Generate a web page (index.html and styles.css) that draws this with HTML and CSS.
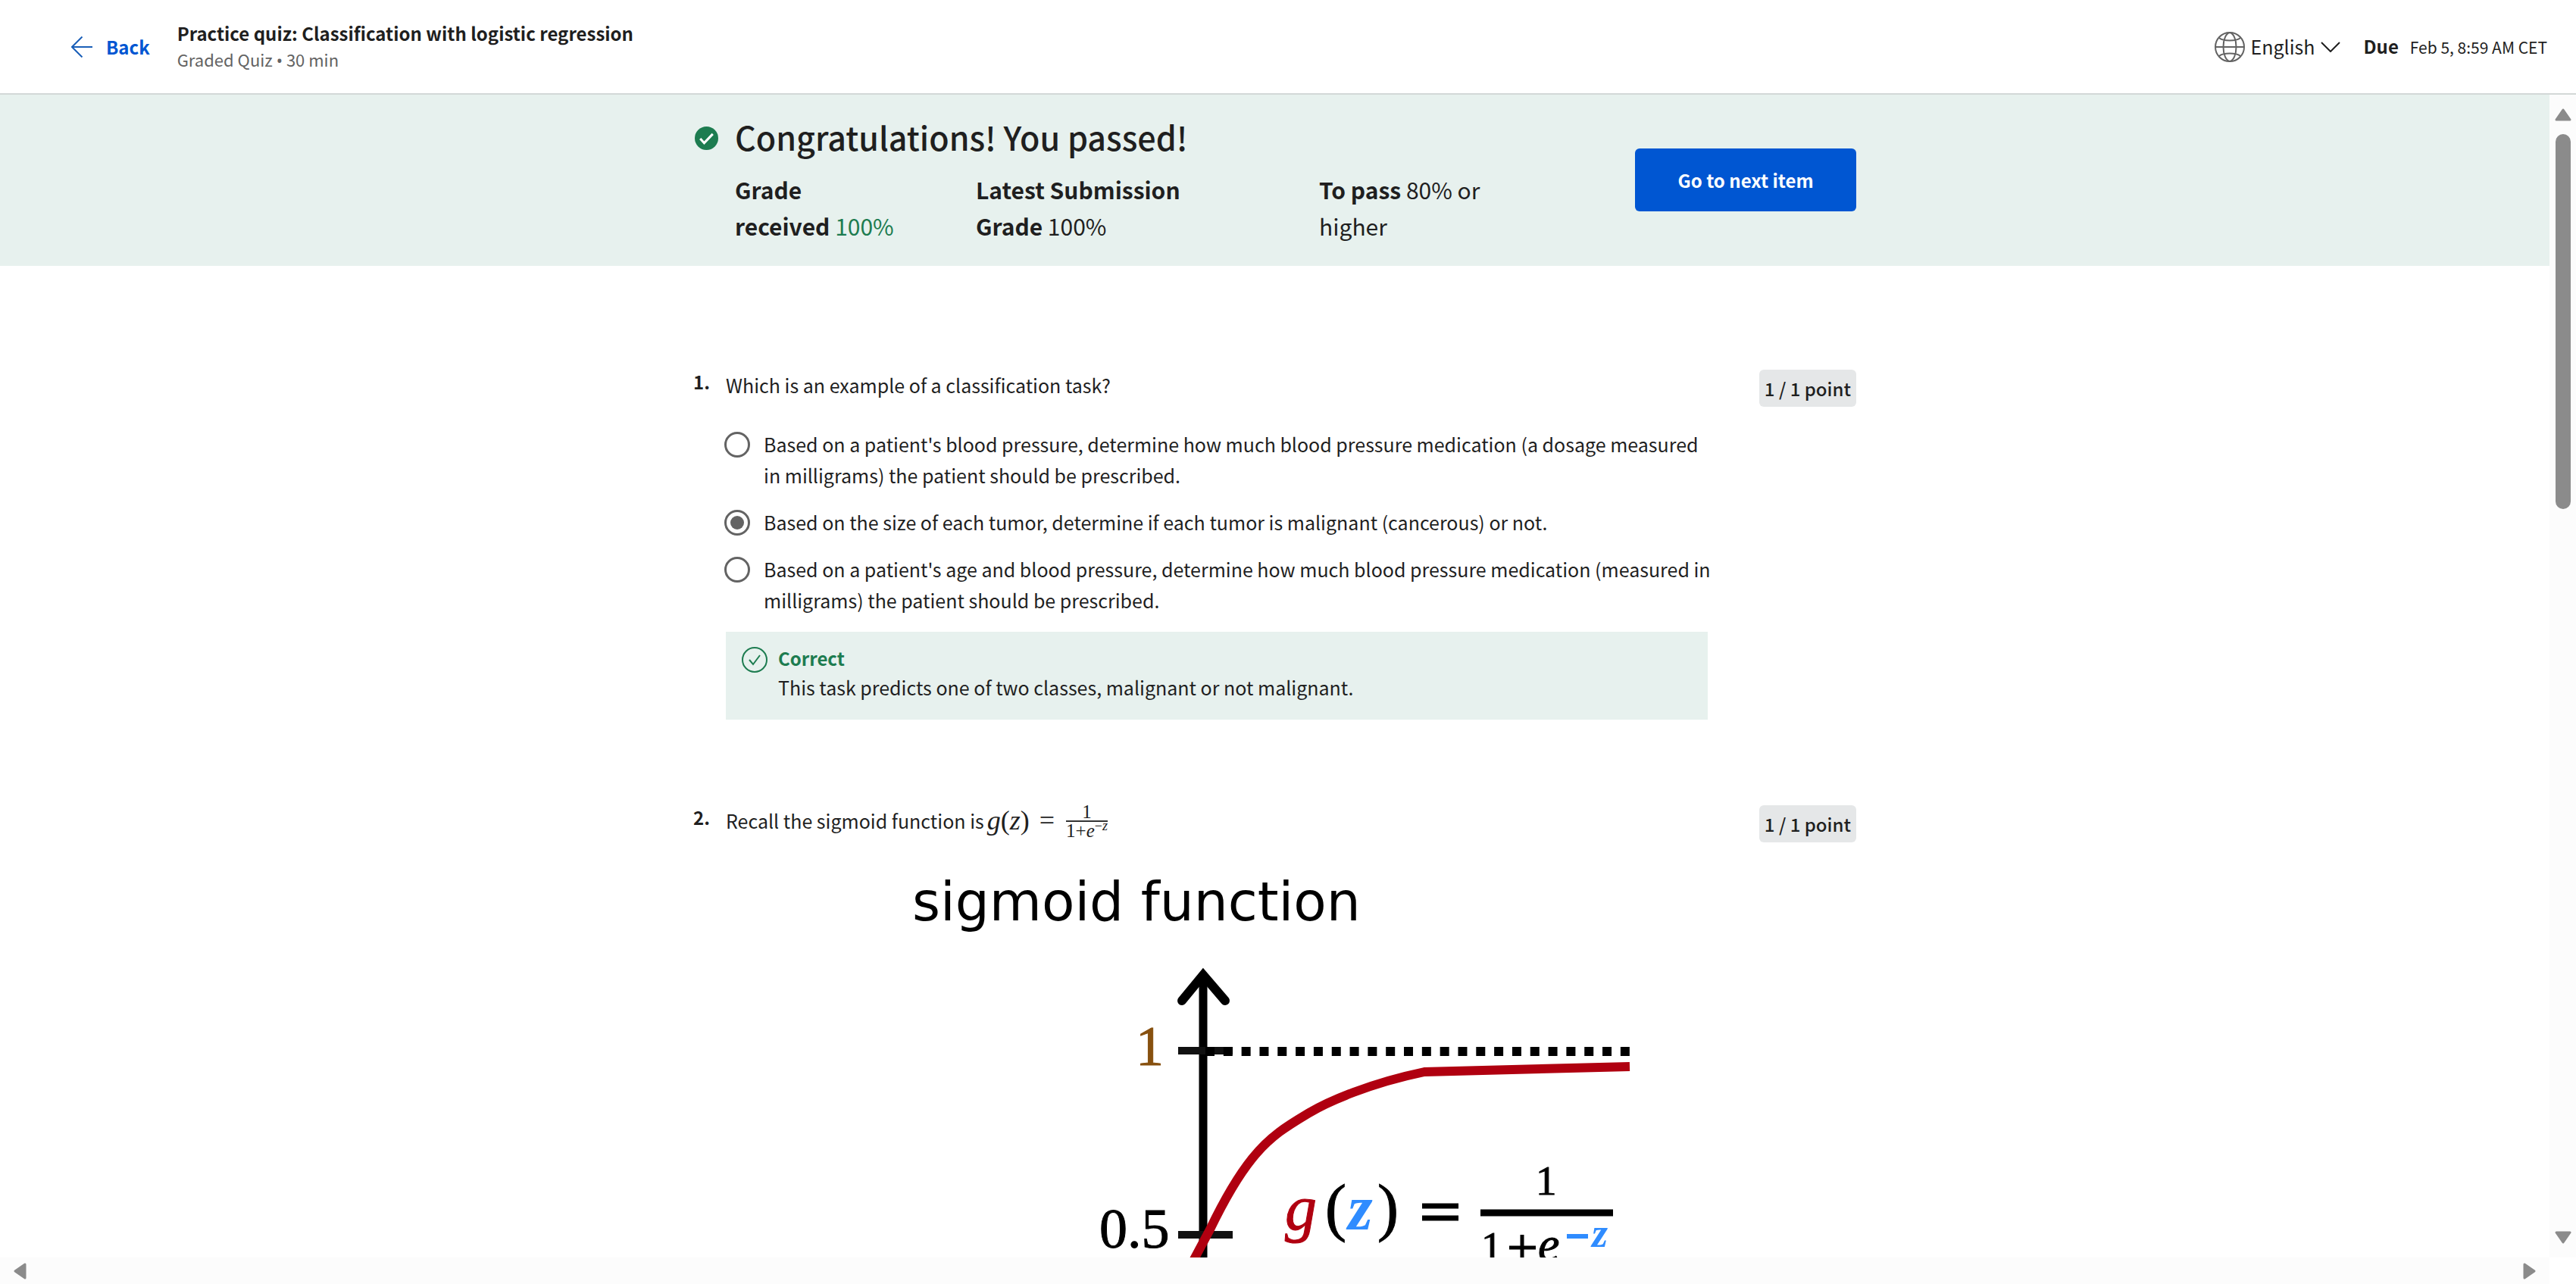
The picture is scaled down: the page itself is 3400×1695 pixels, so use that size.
FILE: index.html
```html
<!DOCTYPE html>
<html lang="en">
<head>
<meta charset="utf-8">
<title>Practice quiz: Classification with logistic regression</title>
<link rel="stylesheet" href="styles.css">
</head>
<body>
<header class="topbar">
  <a class="back" href="#">
    <svg class="back-icon" viewBox="0 0 28 28" aria-hidden="true"><path d="M28 14H1M14.500 0.500L1 14l13.500 13.500"/></svg>
    Back
  </a>
  <div class="heading">
    <h1 class="heading-title">Practice quiz: Classification with logistic regression</h1>
    <p class="heading-sub">Graded Quiz <span class="bullet">•</span> 30 min</p>
  </div>
  <button class="language" type="button">
    <svg class="globe" viewBox="0 0 40 40" aria-hidden="true"><circle cx="20" cy="20" r="19"/><path d="M1 20h38M20 1c-5 1-8.500 9-8.500 19S15 38 20 39M20 1c5 1 8.500 9 8.500 19S25 38 20 39M6 8c3 2.500 8 3.500 14 3.500S31 10.500 34 8M6 32c3-2.500 8-3.500 14-3.500s11 1 14 3.500"/></svg>
    English
    <svg class="chevron" viewBox="0 0 26 14" aria-hidden="true"><path d="M1 1l12 12L25 1"/></svg>
  </button>
  <p class="due"><strong class="due-label">Due</strong> <span class="due-date">Feb 5, 8:59 AM CET</span></p>
</header>

<div class="viewport">
  <main class="content">
    <section class="banner">
      <div class="column banner-row">
        <svg class="passed-icon" viewBox="0 0 30 30" aria-hidden="true"><circle cx="15" cy="15" r="15"/><path d="M7 15.500l5 5.500L23 9.500"/></svg>
        <div class="result">
          <h2 class="result-title">Congratulations! You passed!</h2>
          <div class="grades">
            <p class="grade"><b>Grade received</b>&nbsp;<span class="score">100%</span></p>
            <p class="grade"><b>Latest Submission Grade</b>&nbsp;100%</p>
            <p class="grade"><b>To pass</b> 80% or higher</p>
          </div>
        </div>
        <button class="next" type="button">Go to next item</button>
      </div>
    </section>

    <section class="column questions">
      <article class="question">
        <div class="number">1.</div>
        <div class="question-body">
          <fieldset class="choices">
            <legend class="prompt">Which is an example of a classification task?</legend>
            <label class="choice"><input class="radio" type="radio" name="q1"><span>Based on a patient's blood pressure, determine how much blood pressure medication (a dosage measured in milligrams) the patient should be prescribed.</span></label>
            <label class="choice"><input class="radio" type="radio" name="q1" checked><span>Based on the size of each tumor, determine if each tumor is malignant (cancerous) or not.</span></label>
            <label class="choice"><input class="radio" type="radio" name="q1"><span>Based on a patient's age and blood pressure, determine how much blood pressure medication (measured in milligrams) the patient should be prescribed.</span></label>
          </fieldset>
          <div class="feedback">
            <svg class="feedback-icon" viewBox="0 0 34 34" aria-hidden="true"><circle cx="17" cy="17" r="16"/><path d="M10 17l5 6 9-12"/></svg>
            <div>
              <p class="verdict">Correct</p>
              <p class="explain">This task predicts one of two classes, malignant or not malignant.</p>
            </div>
          </div>
        </div>
        <div class="points">1 / 1 point</div>
      </article>

      <article class="question">
        <div class="number">2.</div>
        <div class="question-body">
          <p class="prompt formula-line">Recall the sigmoid function is
            <span class="math"><i>g</i>(<i>z</i>)<span class="equals">=</span><span class="fraction"><span class="numerator">1</span><span class="denominator">1+<i>e</i><sup class="power">−<i>z</i></sup></span></span></span>
          </p>
          <svg class="plot" viewBox="0 0 1296 720" role="img" aria-label="Graph of the sigmoid function">
            <text class="plot-title" x="246" y="75">sigmoid function</text>
            <path class="axis" d="M630 150V720"/>
            <path class="axis-head" d="M602 181L630 147L659 181"/>
            <path class="tick" d="M597 247h72M597 490h72"/>
            <path class="asymptote" d="M633 248H1193"/>
            <text class="serif label-one" x="541" y="266">1</text>
            <text class="serif label-half" x="493" y="507">0.5</text>
            <path class="curve" d="M590 575L639 483C652 456 670 420 695 389S745 344 770 329S850 290 922 275L1193 268"/>
            <text class="serif term-g" x="738" y="483">g</text>
            <text class="serif paren" x="791" y="482">(</text>
            <text class="serif term-z" x="821" y="483">z</text>
            <text class="serif paren" x="860" y="482">)</text>
            <path class="rule" d="M919 452h48M919 468h48"/>
            <path class="rule rule-thick" d="M996 461h175"/>
            <text class="serif digit" x="1069" y="437">1</text>
            <text class="serif digit" x="997" y="524">1</text>
            <path class="plus" d="M1034 507h35M1051 490v36"/>
            <text class="serif term-e" x="1072" y="524">e</text>
            <path class="minus" d="M1110 492h28"/>
            <text class="serif exponent-z" x="1143" y="506">z</text>
          </svg>
        </div>
        <div class="points">1 / 1 point</div>
      </article>
    </section>
  </main>

  <div class="bar bar-vertical" aria-hidden="true">
    <svg class="arrow" viewBox="0 0 22 17"><path d="M11 2L20 15H2Z"/></svg>
    <div class="track"><div class="thumb"></div></div>
    <svg class="arrow" viewBox="0 0 22 17"><path d="M11 15L20 2H2Z"/></svg>
  </div>
  <div class="bar bar-horizontal" aria-hidden="true">
    <svg class="arrow-side" viewBox="0 0 17 22"><path d="M2 11L15 2V20Z"/></svg>
    <svg class="arrow-side" viewBox="0 0 17 22"><path d="M15 11L2 2V20Z"/></svg>
  </div>
</div>
</body>
</html>
```
FILE: styles.css
```css
* {
  box-sizing: border-box;
  margin: 0;
}

body {
  display: flex;
  flex-direction: column;
  height: 100vh;
  overflow: hidden;
  background: #fff;
  color: #1f1f1f;
  font-family: "Noto Sans CJK SC", "Noto Sans", sans-serif;
  font-size: 25px;
  line-height: 41px;
}

svg {
  flex: none;
  fill: none;
}

button {
  border: 0;
  color: inherit;
  font: inherit;
}

/* Top bar */
.topbar {
  display: flex;
  align-items: center;
  flex: none;
  height: 125px;
  padding: 0 38px 0 94px;
  border-bottom: 2px solid #d3d8d7;
}

.back {
  display: flex;
  align-items: center;
  gap: 18px;
  color: #0056d2;
  font-weight: 700;
  font-size: 24px;
  text-decoration: none;
}

.back-icon {
  width: 28px;
  height: 28px;
  stroke: #1a5fb8;
  stroke-width: 2;
}

.heading {
  margin: 0 auto 0 36px;
  padding-bottom: 4px;
}

.heading-title {
  font-size: 24px;
  font-weight: 700;
  line-height: 36px;
}

.heading-sub {
  color: #636363;
  font-size: 22px;
  line-height: 32px;
}

.bullet {
  font-family: "Noto Sans", sans-serif;
  line-height: 1px;
}

.language {
  display: flex;
  align-items: center;
  gap: 8px;
  padding: 0;
  background: none;
}

.globe {
  width: 40px;
  height: 40px;
  stroke: #636363;
  stroke-width: 2;
}

.chevron {
  width: 26px;
  height: 14px;
  stroke: #1f1f1f;
  stroke-width: 2;
}

.due {
  display: flex;
  align-items: baseline;
  gap: 15px;
  margin-left: 30px;
}

.due-label {
  font-size: 24px;
}

.due-date {
  font-size: 21px;
}

/* Scrolling area */
.viewport {
  display: grid;
  grid-template: minmax(0, 1fr) 35px / minmax(0, 1fr) 35px;
  flex: 1;
  min-height: 0;
}

.content {
  overflow: hidden;
}

.column {
  width: 100%;
  max-width: 1535px;
  margin: 0 auto;
}

.banner {
  background: #e7f1ee;
}

.banner-row {
  display: flex;
  align-items: flex-start;
  padding: 27px 0 29px;
}

.passed-icon {
  width: 31px;
  height: 31px;
  margin: 15px 22px 0 2px;
}

.passed-icon circle {
  fill: #1d7c50;
}

.passed-icon path {
  stroke: #fff;
  stroke-width: 3;
}

.result {
  flex: 1;
}

.result-title {
  font-size: 43px;
  font-weight: 500;
  line-height: 56px;
}

.grades {
  display: grid;
  grid-template-columns: 318px 453px 1fr;
  margin-top: 18px;
  font-size: 30px;
  line-height: 48px;
}

.grade {
  padding-right: 100px;
}

.grade:last-child {
  padding-right: 140px;
}

.grade b {
  font-weight: 700;
}

.score {
  color: #1d7c50;
}

.next {
  width: 292px;
  height: 83px;
  margin-top: 44px;
  border-radius: 6px;
  background: #0056d2;
  color: #fff;
  font-weight: 700;
  font-size: 24px;
}

/* Questions */
.questions {
  display: flex;
  flex-direction: column;
  gap: 113px;
  padding-top: 137px;
}

.question {
  display: grid;
  grid-template-columns: 43px minmax(0, 1296px) 1fr;
  align-items: start;
}

.number {
  font-weight: 700;
  font-size: 24px;
  line-height: 32px;
}

.points {
  justify-self: end;
  padding: 0 7px;
  border-radius: 6px;
  background: #e5e7e8;
  font-size: 24px;
  font-weight: 500;
  line-height: 49px;
}

.choices {
  display: flex;
  flex-direction: column;
  gap: 21px;
  margin-right: -12px;
  padding: 0;
  border: 0;
}

.prompt {
  padding: 0;
  margin-bottom: 37px;
}

.choice {
  display: flex;
  align-items: flex-start;
  gap: 18px;
}

.radio {
  flex: none;
  display: grid;
  place-items: center;
  width: 34px;
  height: 34px;
  margin: 4px 0 0 -2px;
  border: 3px solid #636363;
  border-radius: 50%;
  appearance: none;
}

.radio:checked::before {
  content: "";
  width: 18px;
  height: 18px;
  border-radius: 50%;
  background: #636363;
}

.feedback {
  display: flex;
  gap: 14px;
  margin-top: 21px;
  padding: 16px 21px 24px;
  background: #e7f1ee;
  line-height: 38px;
}

.feedback-icon {
  width: 34px;
  height: 34px;
  margin-top: 4px;
  stroke: #1d7c50;
  stroke-width: 2;
}

.verdict {
  color: #1d7c50;
  font-size: 24px;
  font-weight: 700;
}

/* Inline formula */
.formula-line {
  display: flex;
  gap: 4px;
  height: 41px;
  margin-bottom: 36px;
}

.math {
  display: flex;
  align-items: center;
  font-family: "Liberation Serif", serif;
  font-size: 36px;
}

.equals {
  margin: 0 15px 0 13px;
}

.fraction {
  display: flex;
  flex-direction: column;
  font-size: 25px;
  line-height: 23px;
  text-align: center;
}

.numerator {
  border-bottom: 2px solid #333;
}

.power {
  font-size: 18px;
  line-height: 1px;
}

/* Sigmoid plot */
.plot {
  display: block;
  width: 100%;
}

.plot-title {
  fill: #000;
  font-family: "DejaVu Sans", sans-serif;
  font-size: 71px;
}

.axis {
  stroke: #000;
  stroke-width: 11;
}

.axis-head {
  stroke: #000;
  stroke-width: 12;
  stroke-linecap: round;
}

.tick {
  stroke: #111;
  stroke-width: 10;
}

.asymptote {
  stroke: #000;
  stroke-width: 12;
  stroke-dasharray: 12 11.82;
}

.curve {
  stroke: #b00010;
  stroke-width: 12;
}

.serif {
  fill: #000;
  stroke: #000;
  stroke-width: 1;
  font-family: "Liberation Serif", serif;
  font-size: 74px;
}

.serif.label-one {
  fill: #87500f;
  stroke: #87500f;
}

.serif.term-g {
  fill: #b00010;
  stroke: #b00010;
  font-size: 84px;
  font-style: italic;
}

.serif.paren {
  font-size: 84px;
}

.serif.term-z {
  fill: #2f8cff;
  stroke: none;
  font-size: 84px;
  font-style: italic;
  font-weight: 700;
}

.serif.digit {
  font-size: 55px;
}

.serif.term-e {
  font-size: 64px;
  font-style: italic;
}

.serif.exponent-z {
  fill: #2f8cff;
  stroke: none;
  font-size: 54px;
  font-style: italic;
  font-weight: 700;
}

.rule {
  stroke: #000;
  stroke-width: 7;
}

.rule-thick {
  stroke-width: 9;
}

.plus {
  stroke: #000;
  stroke-width: 5;
}

.minus {
  stroke: #2f8cff;
  stroke-width: 6;
}

/* Scroll bars */
.bar {
  display: flex;
  align-items: center;
  justify-content: space-between;
  background: #fcfcfc;
}

.bar-vertical {
  flex-direction: column;
  padding: 18px 0;
}

.bar-horizontal {
  padding: 0 18px;
}

.arrow {
  width: 22px;
  height: 17px;
}

.arrow-side {
  width: 17px;
  height: 22px;
}

.bar path {
  fill: #8b8b8b;
  stroke: #8b8b8b;
  stroke-width: 3;
  stroke-linejoin: round;
}

.track {
  flex: 1;
  width: 20px;
  padding: 17px 0;
}

.thumb {
  height: 495px;
  max-height: 100%;
  border-radius: 10px;
  background: #8b8b8b;
}
```
